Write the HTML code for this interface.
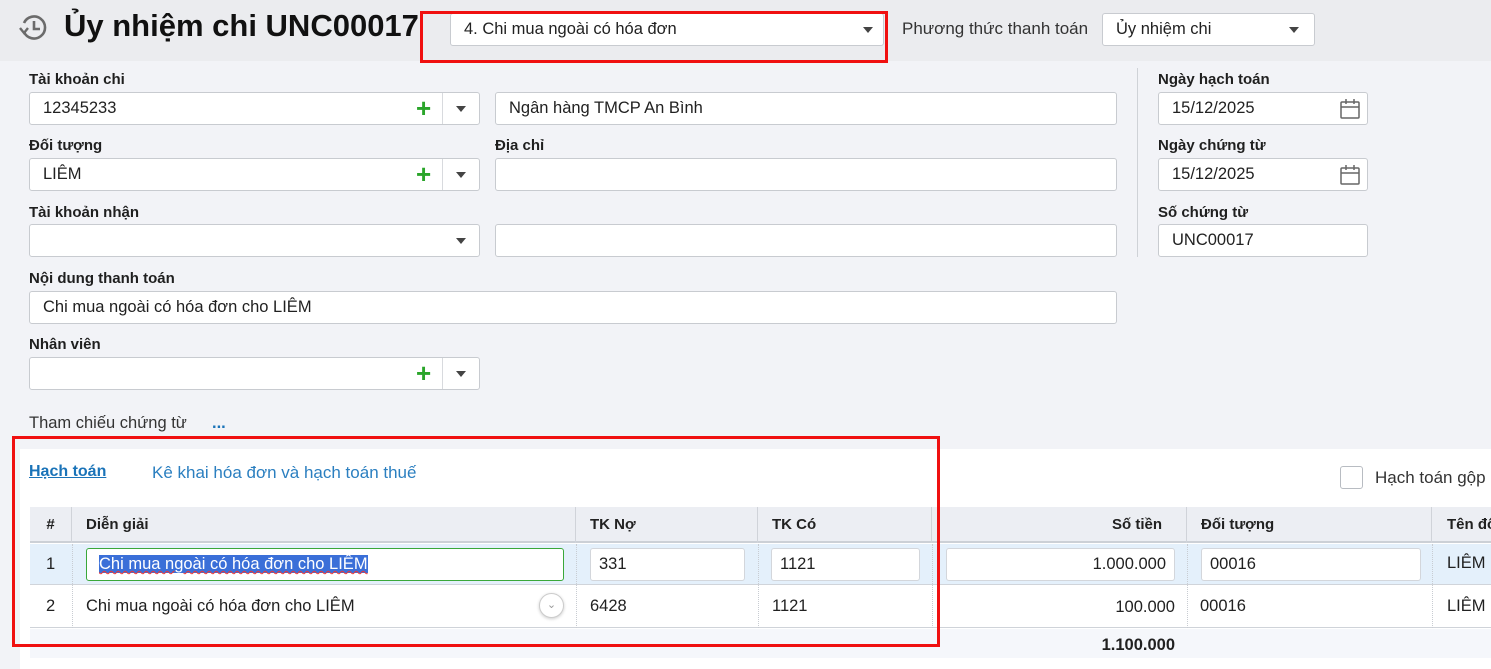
<!DOCTYPE html>
<html><head><meta charset="utf-8"><style>
*{box-sizing:border-box;margin:0;padding:0}
body{width:1491px;height:669px;overflow:hidden;background:#f2f3f7;font-family:"Liberation Sans",sans-serif;font-size:16.5px;color:#212121;position:relative}
.a{position:absolute}
.hdr{left:0;top:0;width:1491px;height:61px;background:#ebecef}
.lbl{position:absolute;font-weight:bold;font-size:15px;color:#1f1f1f;margin-top:2px}
.in{position:absolute;background:#fff;border:1px solid #c8cbd0;border-radius:3px;height:33px;padding-left:13px;line-height:31px;font-size:16.5px}
.tri{position:absolute;width:0;height:0;border-left:5px solid transparent;border-right:5px solid transparent;border-top:6px solid #444}
.plus{position:absolute;color:#2aa52a;font-size:26px;font-weight:bold;line-height:24px}
.dv{position:absolute;top:0;width:1px;height:31px;background:#d8dade}
.th{position:absolute;top:507px;height:36px;line-height:36px;font-weight:bold;font-size:15px;border-right:1px solid #d0d3d9}
.cell{position:absolute;font-size:16.5px}
.ci{position:absolute;background:#fff;border:1px solid #d3d6db;border-radius:3px;height:33px;line-height:31px;padding:0 8px;font-size:16.5px}
</style></head><body>
<div class="a hdr"></div>
<svg class="a" style="left:18px;top:12px" width="32" height="32" viewBox="0 0 32 32" fill="none" stroke="#6b6b6b" stroke-width="2.6"><path d="M6 20 A11 11 0 1 0 6 11"/><path d="M16 9v8h6"/><path d="M2 16l4 5 4-5" stroke-width="2.4"/></svg>
<div class="a" style="left:64px;top:8px;font-size:31px;font-weight:bold;color:#111">Ủy nhiệm chi UNC00017</div>
<div class="in" style="left:450px;top:13px;width:434px;height:33px">4. Chi mua ngoài có hóa đơn<div class="tri" style="left:412px;top:13px"></div></div>
<div class="a" style="left:420px;top:11px;width:468px;height:52px;border:3px solid #f01010"></div>
<div class="a" style="left:902px;top:19px;font-size:17px;color:#333">Phương thức thanh toán</div>
<div class="in" style="left:1102px;top:13px;width:213px">Ủy nhiệm chi<div class="tri" style="left:186px;top:13px"></div></div>

<div class="lbl" style="left:29px;top:69px">Tài khoản chi</div>
<div class="in" style="left:29px;top:92px;width:451px">12345233<div class="plus" style="left:386px;top:3px">+</div><div class="dv" style="left:412px"></div><div class="tri" style="left:426px;top:13px"></div></div>
<div class="in" style="left:495px;top:92px;width:622px">Ngân hàng TMCP An Bình</div>
<div class="lbl" style="left:29px;top:135px">Đối tượng</div>
<div class="in" style="left:29px;top:158px;width:451px">LIÊM<div class="plus" style="left:386px;top:3px">+</div><div class="dv" style="left:412px"></div><div class="tri" style="left:426px;top:13px"></div></div>
<div class="lbl" style="left:495px;top:135px">Địa chỉ</div>
<div class="in" style="left:495px;top:158px;width:622px"></div>
<div class="lbl" style="left:29px;top:202px">Tài khoản nhận</div>
<div class="in" style="left:29px;top:224px;width:451px"><div class="tri" style="left:426px;top:13px"></div></div>
<div class="in" style="left:495px;top:224px;width:622px"></div>
<div class="lbl" style="left:29px;top:268px">Nội dung thanh toán</div>
<div class="in" style="left:29px;top:291px;width:1088px">Chi mua ngoài có hóa đơn cho LIÊM</div>
<div class="lbl" style="left:29px;top:334px">Nhân viên</div>
<div class="in" style="left:29px;top:357px;width:451px"><div class="plus" style="left:386px;top:3px">+</div><div class="dv" style="left:412px"></div><div class="tri" style="left:426px;top:13px"></div></div>
<div class="a" style="left:29px;top:414px;font-size:16.5px;color:#333">Tham chiếu chứng từ</div>
<div class="a" style="left:212px;top:414px;color:#1a73b8;font-weight:bold">...</div>

<div class="a" style="left:1137px;top:68px;width:1px;height:189px;background:#cfd2d7"></div>
<div class="lbl" style="left:1158px;top:69px">Ngày hạch toán</div>
<div class="in" style="left:1158px;top:92px;width:210px">15/12/2025</div>
<div class="lbl" style="left:1158px;top:135px">Ngày chứng từ</div>
<div class="in" style="left:1158px;top:158px;width:210px">15/12/2025</div>
<svg class="a" style="left:1339px;top:98px" width="22" height="22" viewBox="0 0 22 22" fill="none" stroke="#666" stroke-width="1.5"><rect x="2" y="4" width="18" height="16" rx="1"/><path d="M2 9h18M7 1v5M15 1v5"/></svg>
<svg class="a" style="left:1339px;top:164px" width="22" height="22" viewBox="0 0 22 22" fill="none" stroke="#666" stroke-width="1.5"><rect x="2" y="4" width="18" height="16" rx="1"/><path d="M2 9h18M7 1v5M15 1v5"/></svg>
<div class="lbl" style="left:1158px;top:202px">Số chứng từ</div>
<div class="in" style="left:1158px;top:224px;width:210px">UNC00017</div>

<div class="a" style="left:20px;top:449px;width:1471px;height:220px;background:#fff"></div>
<div class="a" style="left:29px;top:463px;font-weight:bold;color:#1a73b8;text-decoration:underline;font-size:16px">Hạch toán</div>
<div class="a" style="left:152px;top:463px;color:#2b7fc0;font-size:17px">Kê khai hóa đơn và hạch toán thuế</div>
<div class="a" style="left:1340px;top:466px;width:23px;height:23px;border:1px solid #b8bcc2;border-radius:3px;background:#fff"></div>
<div class="a" style="left:1375px;top:468px;font-size:17px;color:#333">Hạch toán gộp</div>

<div class="a" style="left:30px;top:507px;width:1461px;height:36px;background:#eceef3;border-bottom:2px solid #ccd0d6"></div>
<div class="th" style="left:30px;width:42px;text-align:center">#</div>
<div class="th" style="left:72px;width:504px;padding-left:14px">Diễn giải</div>
<div class="th" style="left:576px;width:182px;padding-left:14px">TK Nợ</div>
<div class="th" style="left:758px;width:174px;padding-left:14px">TK Có</div>
<div class="th" style="left:932px;width:255px;text-align:right;padding-right:24px">Số tiền</div>
<div class="th" style="left:1187px;width:245px;padding-left:14px">Đối tượng</div>
<div class="th" style="left:1432px;width:80px;padding-left:15px;border:none">Tên đối</div>

<div class="a" style="left:30px;top:544px;width:1461px;height:41px;background:#e4f0fb;border-bottom:1px solid #d0d4da"></div>
<div class="a" style="left:30px;top:586px;width:1461px;height:42px;background:#fff;border-bottom:1px solid #cfd3d9"></div>
<div class="a" style="left:30px;top:629px;width:1461px;height:29px;background:#f5f7fb"></div>
<div class="a" style="left:72px;top:544px;width:0;height:84px;border-left:1px dotted #c8ccd2"></div>
<div class="a" style="left:576px;top:544px;width:0;height:84px;border-left:1px dotted #c8ccd2"></div>
<div class="a" style="left:758px;top:544px;width:0;height:84px;border-left:1px dotted #c8ccd2"></div>
<div class="a" style="left:932px;top:544px;width:0;height:84px;border-left:1px dotted #c8ccd2"></div>
<div class="a" style="left:1187px;top:544px;width:0;height:84px;border-left:1px dotted #c8ccd2"></div>
<div class="a" style="left:1432px;top:544px;width:0;height:84px;border-left:1px dotted #c8ccd2"></div>

<div class="cell" style="left:46px;top:555px">1</div>
<div class="ci" style="left:86px;top:548px;width:478px;border-color:#3aa83a;padding-left:12px"><span style="background:#3a6fd8;color:#fff;text-decoration:underline wavy #e33;text-decoration-thickness:1px">Chi mua ngoài có hóa đơn cho LIÊM</span></div>
<div class="ci" style="left:590px;top:548px;width:155px">331</div>
<div class="ci" style="left:771px;top:548px;width:149px">1121</div>
<div class="ci" style="left:946px;top:548px;width:229px;text-align:right">1.000.000</div>
<div class="ci" style="left:1201px;top:548px;width:220px">00016</div>
<div class="cell" style="left:1447px;top:554px">LIÊM</div>

<div class="cell" style="left:46px;top:597px">2</div>
<div class="cell" style="left:86px;top:597px">Chi mua ngoài có hóa đơn cho LIÊM</div>
<div class="a" style="left:539px;top:593px;width:25px;height:25px;border:1px solid #ccc;border-radius:50%;background:#fff;box-shadow:0 1px 3px rgba(0,0,0,.2);text-align:center;line-height:22px;color:#999;font-size:11px">&#8964;</div>
<div class="cell" style="left:590px;top:597px">6428</div>
<div class="cell" style="left:772px;top:597px">1121</div>
<div class="cell" style="left:1040px;top:598px;width:135px;text-align:right">100.000</div>
<div class="cell" style="left:1200px;top:597px">00016</div>
<div class="cell" style="left:1447px;top:597px">LIÊM</div>
<div class="cell" style="left:1040px;top:636px;width:135px;text-align:right;font-weight:bold">1.100.000</div>

<div class="a" style="left:12px;top:436px;width:928px;height:211px;border:3px solid #f01010"></div>
</body></html>
